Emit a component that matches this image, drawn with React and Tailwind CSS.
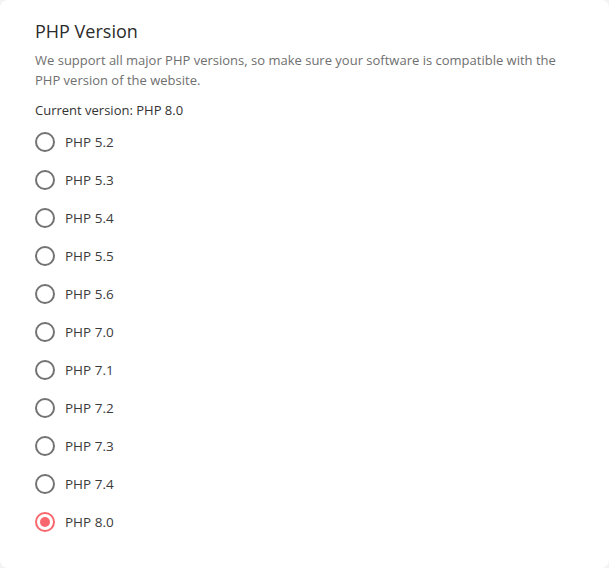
import { useState } from "react";

const versions = ["5.2", "5.3", "5.4", "5.5", "5.6", "7.0", "7.1", "7.2", "7.3", "7.4", "8.0"];

// Plain radio row with a custom drawn circle
function RadioRow({ label, checked, onSelect }) {
  return (
    <label className="flex items-center h-[38px] cursor-pointer" onClick={onSelect}>
      <span
        className={
          "flex items-center justify-center w-5 h-5 rounded-full border-2 " +
          (checked ? "border-[#f8676e]" : "border-[#737373]")
        }
      >
        {checked && <span className="w-[10px] h-[10px] rounded-full bg-[#f8676e]" />}
      </span>
      <span className="ml-[10px] text-[13.5px] text-[#3b3b3b]">{label}</span>
    </label>
  );
}

export default function App() {
  const [current, setCurrent] = useState("8.0");

  return (
    <div className="w-[609px] h-[568px] bg-[#f3f3f3]" style={{ fontFamily: '"Open Sans", "Noto Sans", sans-serif' }}>
      <div className="h-full bg-white rounded-lg px-[35px] pt-[18px]">
        <h2 className="text-[18px] leading-[26px] text-[#2b2b2b]">PHP Version</h2>
        <p className="mt-[6px] text-[13px] leading-[20px] text-[#6f6f6f]">
          We support all major PHP versions, so make sure your software is compatible with the PHP version of the website.
        </p>
        <p className="mt-[10px] text-[13px] leading-[20px] text-[#333]">Current version: PHP {current}</p>
        <div className="mt-[3px] flex flex-col">
          {versions.map((v) => (
            <RadioRow key={v} label={`PHP ${v}`} checked={current === v} onSelect={() => setCurrent(v)} />
          ))}
        </div>
      </div>
    </div>
  );
}
